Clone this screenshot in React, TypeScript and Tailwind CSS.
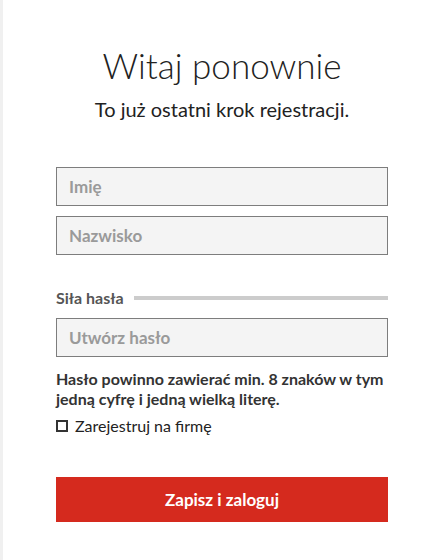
export default function App() {
  return (
    <div className="flex min-h-[560px] w-[437px] bg-white" style={{ fontFamily: 'Lato, "Open Sans", sans-serif' }}>
      <div className="w-[3px] shrink-0 bg-[#f0f0f0]" />
      <div className="ml-[53px] w-[332px] pt-[43px]">
        <h1 className="text-center text-[35px] font-light leading-[44px] text-[#222]">Witaj ponownie</h1>
        <p className="mt-[10px] text-center text-[20px] leading-[24px] text-[#222]">
          To już ostatni krok rejestracji.
        </p>

        <div className="mt-[46px] flex flex-col gap-[10px]">
          <input
            placeholder="Imię"
            className="h-[39px] w-full border border-[#7d7d7d] bg-[#f4f4f4] px-3 text-[17px] font-bold text-[#333] outline-none placeholder:text-[#9a9a9a]"
          />
          <input
            placeholder="Nazwisko"
            className="h-[39px] w-full border border-[#7d7d7d] bg-[#f4f4f4] px-3 text-[17px] font-bold text-[#333] outline-none placeholder:text-[#9a9a9a]"
          />
        </div>

        <div className="mt-[31px] flex h-[24px] items-center gap-[10px]">
          <span className="text-[16px] font-bold text-[#555]">Siła hasła</span>
          <div className="h-[4px] flex-1 bg-[#cccccc]" />
        </div>

        <input
          placeholder="Utwórz hasło"
          type="password"
          className="mt-[8px] h-[39px] w-full border border-[#7d7d7d] bg-[#f4f4f4] px-3 text-[17px] font-bold text-[#333] outline-none placeholder:text-[#9a9a9a]"
        />

        <p className="mt-[12px] text-[16px] font-bold leading-[20px] text-[#333]">
          Hasło powinno zawierać min. 8 znaków w tym jedną cyfrę i jedną wielką literę.
        </p>

        <label className="mt-[5px] flex items-center gap-[7px] text-[16px] text-[#222]">
          <span className="h-[12px] w-[12px] border-2 border-[#333] bg-white" />
          Zarejestruj na firmę
        </label>

        <button className="mt-[39px] h-[45px] w-full bg-[#d52a1e] text-[17px] font-bold text-white">
          Zapisz i zaloguj
        </button>
      </div>
    </div>
  );
}
